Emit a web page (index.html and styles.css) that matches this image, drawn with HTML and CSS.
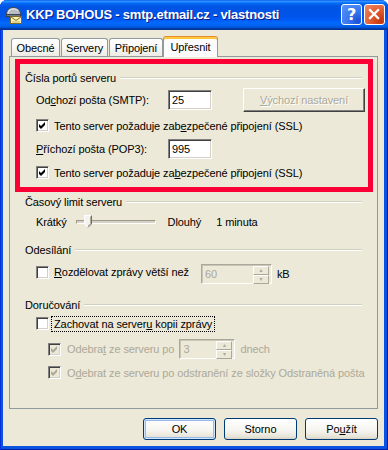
FILE: index.html
```html
<!DOCTYPE html>
<html lang="cs">
<head>
  <meta charset="UTF-8">
  <title>KKP BOHOUS - smtp.etmail.cz - vlastnosti</title>
  <link rel="stylesheet" href="styles.css">
</head>
<body>

<div class="window">
  <div class="titlebar">
    <svg class="app-icon" viewBox="0 0 18 18">
      <path d="M1.5 8.5 C1.5 3.5 4.5 1.5 8.5 1.5 C12.5 1.5 15.5 3.5 15.5 8.5 Z" fill="#b9bec4" stroke="#3b4450"/>
      <path d="M3 7.5 C3.5 4.5 5.5 3 8.5 3 C10 3 11.5 3.5 12.5 4.5" fill="none" stroke="#eef2f5"/>
      <rect x="1.5" y="8.5" width="14" height="2" fill="#6e7a86" stroke="#3b4450"/>
      <rect x="5.5" y="10.5" width="11" height="7" fill="#fbf2b8" stroke="#7d6a2a"/>
      <path d="M5.5 10.5 L11 14.5 L16.5 10.5" fill="none" stroke="#7d6a2a"/>
      <path d="M7 16 H15" stroke="#c9b565"/>
    </svg>
    <span class="title">KKP BOHOUS - smtp.etmail.cz - vlastnosti</span>
    <div class="caption-btn help">?</div>
    <div class="caption-btn close">
      <svg viewBox="0 0 21 21" width="19" height="19"><path d="M5.5 5.5 L14.5 14.5 M14.5 5.5 L5.5 14.5" stroke="#fff" stroke-width="2.4" stroke-linecap="square"/></svg>
    </div>
  </div>

  <div class="client">
    <div class="tabs">
      <div class="tab w-obecne">Obecné</div>
      <div class="tab w-servery">Servery</div>
      <div class="tab w-pripojeni">Připojení</div>
      <div class="tab active">Upřesnit</div>
    </div>

    <div class="panel">
      <!-- zvýrazněná část s porty -->
      <div class="highlight">
        <div class="group-head"><span>Čísla portů serveru</span><i></i></div>

        <div class="row port-row first">
          <span class="port-label">Od<u>c</u>hozí pošta (SMTP):</span>
          <div class="field">25</div>
          <div class="btn-classic disabled"><u>V</u>ýchozí nastavení</div>
        </div>
        <div class="row check-row">
          <span class="check on"><svg viewBox="0 0 9 9"><polygon points="1,3 3,5 7,1 7,4 3,8 1,6"/></svg></span>
          <span class="check-text">Tento server požaduje zab<u>e</u>zpečené připojení (SSL)</span>
        </div>

        <div class="row port-row">
          <span class="port-label"><u>P</u>říchozí pošta (POP3):</span>
          <div class="field">995</div>
        </div>
        <div class="row check-row">
          <span class="check on"><svg viewBox="0 0 9 9"><polygon points="1,3 3,5 7,1 7,4 3,8 1,6"/></svg></span>
          <span class="check-text">Tento server požaduje za<u>b</u>ezpečené připojení (SSL)</span>
        </div>
      </div>

      <div class="sections">
        <div class="group-head timeout-head"><span>Časový limit serveru</span><i></i></div>
        <div class="row slider-row">
          <span>Krátký</span>
          <div class="slider">
            <div class="groove"></div>
            <svg class="thumb" viewBox="0 0 9 14" width="9" height="14">
              <path d="M0.5 0.5 H7.5 V9 L4 12.5 L0.5 9 Z" fill="#f4f3ee" stroke="#fff"/>
              <path d="M7.5 0.5 V9 L4 12.5" fill="none" stroke="#716f64"/>
              <path d="M6.5 1.5 V8.5 L4 11" fill="none" stroke="#aca899"/>
            </svg>
          </div>
          <span class="dlouhy">Dlouhý</span>
          <span class="minuta">1 minuta</span>
        </div>

        <div class="group-head send-head"><span>Odesílání</span><i></i></div>
        <div class="row split-row">
          <div class="check-group">
            <span class="check"></span>
            <span class="check-text"><u>R</u>ozdělovat zprávy větší než</span>
          </div>
          <div class="spin w-60">
            <span class="spin-value">60</span>
            <div class="spin-btns"><b>&#9652;</b><b>&#9662;</b></div>
          </div>
          <span class="unit">kB</span>
        </div>

        <div class="group-head deliver-head"><span>Doručování</span><i></i></div>
        <div class="row keep-row">
          <span class="check"></span>
          <span class="check-text focus">Zachovat na server<u>u</u> kopii zprávy</span>
        </div>
        <div class="row sub-row remove-row">
          <span class="check off"><svg viewBox="0 0 9 9"><polygon points="1,3 3,5 7,1 7,4 3,8 1,6"/></svg></span>
          <span class="check-text dim">Odebra<u>t</u> ze serveru po</span>
          <div class="spin w-3">
            <span class="spin-value">3</span>
            <div class="spin-btns"><b>&#9652;</b><b>&#9662;</b></div>
          </div>
          <span class="unit dim">dnech</span>
        </div>
        <div class="row sub-row deleted-row">
          <span class="check off"><svg viewBox="0 0 9 9"><polygon points="1,3 3,5 7,1 7,4 3,8 1,6"/></svg></span>
          <span class="check-text dim">O<u>d</u>ebrat ze serveru po odstranění ze složky Odstraněná pošta</span>
        </div>
      </div>
    </div>

    <div class="buttons">
      <div class="xp-btn default">OK</div>
      <div class="xp-btn">Storno</div>
      <div class="xp-btn">Po<u>u</u>žít</div>
    </div>
  </div>
</div>

</body>
</html>
```

FILE: styles.css
```css
* {
  box-sizing: border-box;
}
body {
  margin: 0;
  background: #fff;
  font-family: "Liberation Sans", "DejaVu Sans", sans-serif;
  font-size: 11px;
  letter-spacing: -0.1px;
  color: #000;
}
u {
  text-decoration: underline;
  text-underline-offset: 1px;
}

/* okno */
.window {
  width: 388px;
  height: 450px;
  display: flex;
  flex-direction: column;
  background: #0a52e0;
  border-radius: 7px 7px 0 0;
  overflow: hidden;
  box-shadow: inset 1px 0 #0831d9, inset -1px -1px #001ea0;
}
.titlebar {
  height: 30px;
  display: flex;
  align-items: center;
  padding: 0 3px 1px 5px;
  background: linear-gradient(to bottom, #0058ee 0%, #3593ff 4%, #288eff 6%, #127dff 8%, #036ffc 10%, #0262ee 14%, #0057e5 20%, #0054e3 24%, #0055eb 56%, #005bf5 66%, #026afe 76%, #0062ef 86%, #0052d6 92%, #0040ab 94%, #003092 100%);
}
.app-icon {
  width: 18px;
  height: 18px;
  margin-right: 3px;
}
.title {
  flex: 1;
  color: #fff;
  font: bold 13px "Liberation Sans", sans-serif;
  letter-spacing: -0.2px;
  text-shadow: 1px 1px #0c1b8a;
}
.caption-btn {
  width: 21px;
  height: 21px;
  border: 1px solid #fff;
  border-radius: 3px;
  display: flex;
  align-items: center;
  justify-content: center;
  color: #fff;
}
.help {
  background: radial-gradient(circle at 85% 85%, #1a4fd8 0%, #3a78f0 45%, #5a93f8 100%);
  font: bold 16px "DejaVu Sans", sans-serif;
}
.close {
  margin-left: 2px;
  background: radial-gradient(circle at 85% 85%, #c2350d 0%, #e05a2e 45%, #f08a66 100%);
}

.client {
  flex: 1;
  margin: 0 4px 4px 3px;
  background: #ece9d8;
  padding: 6px 6px 0;
}

/* záložky */
.tabs {
  display: flex;
  align-items: flex-end;
  height: 20px;
  padding-left: 2px;
}
.tab {
  height: 18px;
  margin-right: 1px;
  border: 1px solid #919b9c;
  border-bottom: 0;
  border-radius: 3px 3px 0 0;
  background: linear-gradient(#fff, #fafaf7 40%, #eceae4);
  display: flex;
  align-items: center;
  justify-content: center;
  padding-top: 1px;
}
.w-obecne { width: 49px; }
.w-servery { width: 47px; }
.w-pripojeni { width: 54px; margin-right: 0; }
.tab.active {
  width: 55px;
  height: 21px;
  margin-bottom: -1px;
  position: relative;
  z-index: 1;
  background: #fcfcfe;
  border-top: 1px solid #e68b2c;
  box-shadow: inset 0 2px #ffc73c;
  padding-top: 2px;
  padding-bottom: 2px;
}

.panel {
  height: 353px;
  border: 1px solid #919b9c;
  background: #ece9d8;
}
.highlight {
  margin: 2px 4px 0 5px;
  border: 5px solid #fb0034;
  padding: 0 6px 8px 5px;
}
.sections {
  padding: 0 15px;
}

.group-head {
  display: flex;
  align-items: center;
  height: 13px;
  margin-top: 7px;
  white-space: nowrap;
}
.group-head span {
  padding-right: 4px;
}
.group-head i {
  flex: 1;
  height: 2px;
  border-top: 1px solid #d0d0bf;
  border-bottom: 1px solid #fff;
}
.timeout-head { margin-top: 3px; }
.send-head { margin-top: 12px; }
.deliver-head { margin-top: 14px; }

.row {
  display: flex;
  align-items: center;
  padding-left: 11px;
  margin-top: 7px;
  white-space: nowrap;
}

/* porty */
.port-row { height: 20px; }
.port-row.first {
  height: 24px;
  margin-top: 4px;
}
.port-label {
  width: 132px;
}
.field {
  width: 44px;
  height: 20px;
  background: #fff;
  border: 1px solid;
  border-color: #808080 #fff #fff #808080;
  box-shadow: inset 1px 1px #404040, inset -1px -1px #d4d0c8;
  padding: 3px 0 0 3px;
}
.btn-classic {
  margin-left: auto;
  margin-right: -3px;
  width: 122px;
  height: 24px;
  border: 1px solid;
  border-color: #fff #404040 #404040 #fff;
  box-shadow: inset -1px -1px #808080;
  display: flex;
  align-items: center;
  justify-content: center;
}
.disabled {
  color: #aca899;
  text-shadow: 1px 1px #fff;
}

/* zaškrtávátka */
.check-row { height: 13px; }
.check {
  width: 13px;
  height: 13px;
  flex: none;
  background: #fff;
  border: 1px solid;
  border-color: #808080 #fff #fff #808080;
  box-shadow: inset 1px 1px #404040, inset -1px -1px #d4d0c8;
  padding: 2px;
}
.check svg {
  display: block;
  width: 9px;
  height: 9px;
  margin: -1px 0 0 -1px;
}
.check svg polygon {
  fill: #000;
}
.check.off {
  background: #ece9d8;
}
.check.off svg polygon {
  fill: #aca899;
}
.check-text {
  margin-left: 4px;
  padding: 0 1px;
}
.dim {
  color: #aca899;
}

/* posuvník */
.slider-row {
  height: 18px;
  margin-top: 5px;
}
.slider {
  display: grid;
  width: 80px;
  height: 18px;
  margin-left: 9px;
  align-items: center;
}
.groove,
.thumb {
  grid-area: 1 / 1;
}
.groove {
  height: 4px;
  border: 1px solid;
  border-color: #9d9a8c #fff #fff #9d9a8c;
  background: #d6d3c4;
}
.thumb {
  margin-left: 8px;
  margin-top: -1px;
}
.dlouhy {
  margin-left: 12px;
}
.minuta {
  margin-left: 15px;
}

/* číselníky */
.split-row {
  height: 20px;
  margin-top: 8px;
}
.check-group {
  display: flex;
  align-items: center;
  margin-bottom: 4px;
}
.spin {
  height: 20px;
  display: flex;
  align-items: center;
  background: #ece9d8;
  border: 1px solid;
  border-color: #aca899 #fff #fff #aca899;
  box-shadow: inset 1px 1px #c9c6b8;
  padding: 1px 2px 1px 3px;
  color: #aca899;
}
.w-60 {
  width: 71px;
  margin-left: 11px;
}
.w-3 {
  width: 56px;
  margin-left: 4px;
}
.spin-value {
  flex: 1;
}
.spin-btns {
  display: flex;
  flex-direction: column;
  width: 16px;
  height: 16px;
}
.spin-btns b {
  flex: 1;
  font-weight: normal;
  font-size: 6px;
  line-height: 7px;
  text-align: center;
  color: #aca899;
  border: 1px solid;
  border-color: #fff #aca899 #aca899 #fff;
}
.unit {
  margin-left: 5px;
}

.keep-row {
  height: 17px;
  margin-top: 4px;
}
.focus {
  outline: 1px dotted #000;
  outline-offset: 1px;
}
.sub-row {
  padding-left: 23px;
}
.sub-row .check-text {
  margin-left: 5px;
}
.remove-row {
  height: 20px;
  margin-top: 7px;
}
.deleted-row {
  height: 13px;
}

/* tlačítka */
.buttons {
  display: flex;
  justify-content: flex-end;
  gap: 8px;
  margin-top: 9px;
}
.xp-btn {
  width: 73px;
  height: 22px;
  border: 1px solid #003c74;
  border-radius: 3px;
  background: linear-gradient(#fff, #f5f4ef 60%, #e6e3d6 90%, #d6d0c5);
  display: flex;
  align-items: center;
  justify-content: center;
}
.xp-btn.default {
  box-shadow: inset 0 0 0 1px #cee7ff, inset 0 0 0 2px #98b8ea;
}
```
